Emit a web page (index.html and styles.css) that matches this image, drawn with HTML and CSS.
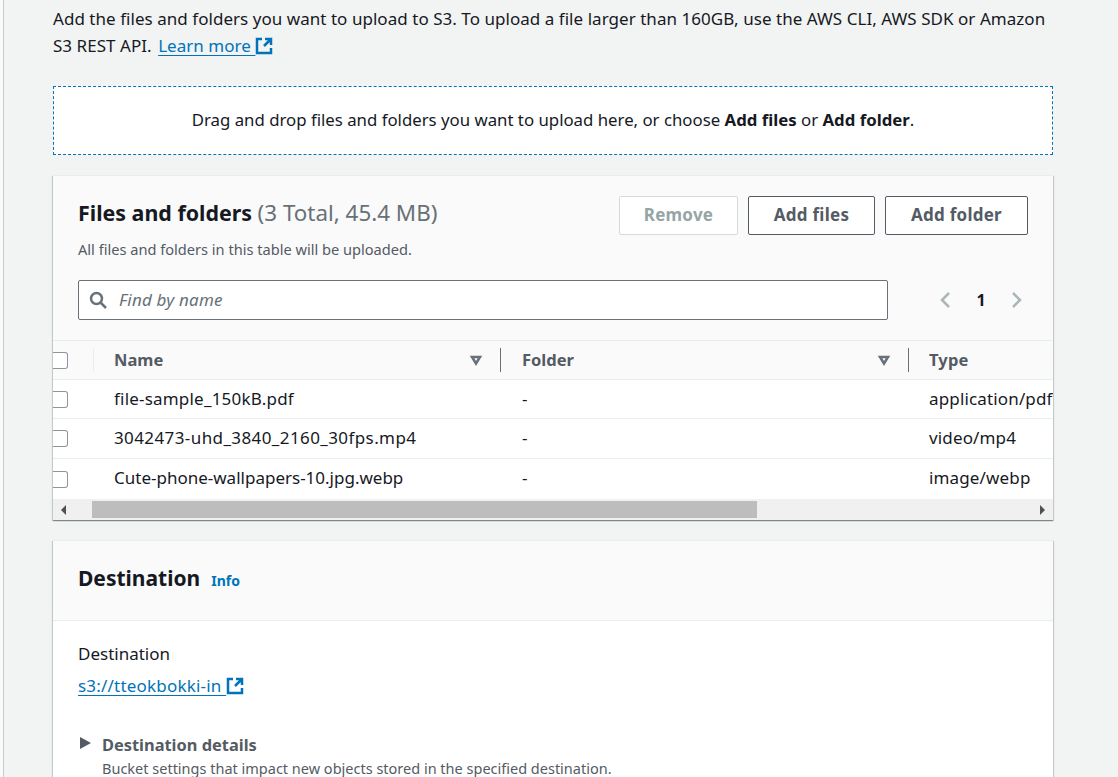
FILE: index.html
```html
<!DOCTYPE html>
<html>
    <head>
        <title>Upload</title>
        <link rel="stylesheet" href="styles.css">
    </head>
    <body>
        <div class="page">
            <p class="intro">Add the files and folders you want to upload to S3. To upload a file larger than 160GB, use the AWS CLI, AWS SDK or Amazon S3 REST API. <a class="ext-link" href="#">Learn more </a><svg class="ext-icon" viewBox="0 0 18 18"><path d="M7 2H2v14h14v-5M10 2h6v6M16 2L9 9"/></svg></p>

            <div class="dropzone">Drag and drop files and folders you want to upload here, or choose <b>Add files</b> or <b>Add folder</b>.</div>

            <section class="card">
                <div class="files-head">
                    <div class="files-title-row">
                        <div>
                            <h2 class="card-title">Files and folders <span class="count">(3 Total, 45.4 MB)</span></h2>
                            <p class="files-desc">All files and folders in this table will be uploaded.</p>
                        </div>
                        <div class="actions">
                            <button class="btn btn-remove">Remove</button>
                            <button class="btn btn-files">Add files</button>
                            <button class="btn btn-folder">Add folder</button>
                        </div>
                    </div>
                    <div class="filter-row">
                        <div class="search">
                            <svg class="search-icon" viewBox="0 0 18 18"><circle cx="7.5" cy="7.5" r="5.5"/><path d="M11.5 11.5L17 17"/></svg>
                            <span class="placeholder">Find by name</span>
                        </div>
                        <div class="pager">
                            <svg class="chevron" viewBox="0 0 12 18"><path d="M10 2L3 9l7 7"/></svg>
                            <span class="page-num">1</span>
                            <svg class="chevron" viewBox="0 0 12 18"><path d="M2 2l7 7-7 7"/></svg>
                        </div>
                    </div>
                </div>

                <div class="table">
                    <div class="row row-head">
                        <div class="cell-check"><span class="checkbox"></span></div>
                        <div class="cell cell-first">Name<svg class="sort" viewBox="0 0 14 12"><path d="M3 3h8L7 9.5z"/></svg></div>
                        <div class="cell cell-second">Folder<svg class="sort" viewBox="0 0 14 12"><path d="M3 3h8L7 9.5z"/></svg></div>
                        <div class="cell cell-third">Type</div>
                    </div>
                    <div class="row">
                        <div class="cell-check"><span class="checkbox"></span></div>
                        <div class="cell cell-first name-sample">file-sample_150kB.pdf</div>
                        <div class="cell cell-second">-</div>
                        <div class="cell cell-third">application/pdf</div>
                    </div>
                    <div class="row row-tall">
                        <div class="cell-check"><span class="checkbox"></span></div>
                        <div class="cell cell-first name-digits">3042473-uhd_3840_2160_30fps.mp4</div>
                        <div class="cell cell-second">-</div>
                        <div class="cell cell-third">video/mp4</div>
                    </div>
                    <div class="row row-last">
                        <div class="cell-check"><span class="checkbox"></span></div>
                        <div class="cell cell-first">Cute-phone-wallpapers-10.jpg.webp</div>
                        <div class="cell cell-second">-</div>
                        <div class="cell cell-third">image/webp</div>
                    </div>
                </div>

                <div class="scrollbar">
                    <span class="arrow-left"></span>
                    <span class="thumb"></span>
                    <span class="arrow-right"></span>
                </div>
            </section>

            <section class="card card-dest">
                <div class="dest-head">
                    <h2 class="card-title">Destination</h2>
                    <a class="info" href="#">Info</a>
                </div>
                <div class="dest-body">
                    <p class="dest-label">Destination</p>
                    <p class="dest-value"><a class="ext-link" href="#">s3://tteokbokki-in </a><svg class="ext-icon" viewBox="0 0 18 18"><path d="M7 2H2v14h14v-5M10 2h6v6M16 2L9 9"/></svg></p>
                    <div class="details">
                        <span class="caret"></span>
                        <div>
                            <p class="details-title">Destination details</p>
                            <p class="details-desc">Bucket settings that impact new objects stored in the specified destination.</p>
                        </div>
                    </div>
                </div>
            </section>
        </div>
    </body>
</html>
```
FILE: styles.css
```css
html, body{
    margin:0;
    height:777px;
    overflow:hidden;
    background-color:#f9fafa;
}
body{
    font-family:"Noto Sans", sans-serif;
    font-size:17px;
    color:#16191f;
}
p, h2{
    margin:0;
}
.page{
    margin-left:3px;
    height:777px;
    border-left:1px solid #c6cccc;
    background-color:#f2f3f3;
    padding:5px 65px 0 49px;
    overflow:hidden;
}
.intro{
    line-height:27px;
    letter-spacing:0.04px;
}
.intro .ext-link{
    margin-left:2px;
}
.ext-link{
    color:#0073bb;
    text-decoration:underline;
    text-underline-offset:3px;
    text-decoration-thickness:1px;
}
.ext-icon{
    width:18px;
    height:18px;
    vertical-align:-3px;
    fill:none;
    stroke:#0073bb;
    stroke-width:2.5;
}
.dropzone{
    margin-top:27px;
    height:69px;
    box-sizing:border-box;
    border:1px dashed #0073bb;
    background-color:white;
    font-size:16.8px;
    text-align:center;
    line-height:65px;
}
.card{
    margin-top:20px;
    background-color:white;
    border-top:1px solid #eaeded;
    box-shadow:0 1px 1px 0 rgba(0, 28, 36, 0.3), 1px 1px 1px 0 rgba(0, 28, 36, 0.15), -1px 1px 1px 0 rgba(0, 28, 36, 0.15);
}
.files-head{
    background-color:#fafafa;
    padding:19px 25px 20px;
}
.files-title-row{
    display:flex;
    justify-content:space-between;
}
.card-title{
    font-size:21.4px;
    font-weight:bold;
    line-height:36px;
}
.count{
    font-size:22.4px;
    font-weight:normal;
    color:#687078;
}
.files-desc{
    font-size:14.6px;
    color:#545b64;
    line-height:20px;
    margin-top:8px;
}
.actions{
    display:flex;
    gap:10px;
    align-items:flex-start;
    margin-top:1px;
}
.btn{
    height:39px;
    box-sizing:border-box;
    background-color:white;
    border:1px solid #545b64;
    border-radius:2px;
    color:#545b64;
    font-family:inherit;
    font-size:17px;
    letter-spacing:0.25px;
    font-weight:bold;
    padding:0 0 2px;
}
.btn-remove{
    width:119px;
    border-color:#d5dbdb;
    color:#95a5a6;
}
.btn-files{
    width:127px;
}
.btn-folder{
    width:143px;
}
.filter-row{
    display:flex;
    align-items:center;
    margin-top:21px;
}
.search{
    width:810px;
    height:40px;
    box-sizing:border-box;
    border:1px solid #687078;
    border-radius:2px;
    background-color:white;
    display:flex;
    align-items:center;
    padding-left:10px;
}
.search-icon{
    width:18px;
    height:18px;
    fill:none;
    stroke:#687078;
    stroke-width:2.5;
}
.placeholder{
    margin-left:12px;
    padding-bottom:2px;
    font-style:italic;
    letter-spacing:0.2px;
    color:#687078;
}
.pager{
    display:flex;
    align-items:center;
    margin-left:51px;
    gap:25px;
}
.chevron{
    width:12px;
    height:18px;
    fill:none;
    stroke:#aab7b8;
    stroke-width:2.5;
}
.page-num{
    font-weight:bold;
    font-size:16px;
    width:10px;
    text-align:center;
}
.table{
    overflow:hidden;
}
.row{
    display:flex;
    align-items:center;
    height:39px;
    box-sizing:border-box;
    border-bottom:1px solid #eaeded;
}
.row-tall{
    height:40px;
}
.row-last{
    height:40px;
    border-bottom:none;
}
.row-head{
    height:40px;
    border-top:1px solid #eaeded;
    background-color:#fafafa;
    font-size:16.5px;
    font-weight:bold;
    color:#545b64;
}
.cell-check{
    width:40px;
    flex:none;
    display:flex;
}
.checkbox{
    width:15px;
    height:17px;
    box-sizing:border-box;
    background-color:white;
    border:1.5px solid #8c949c;
    border-left:none;
    border-radius:0 3px 3px 0;
}
.cell{
    flex:none;
    box-sizing:border-box;
    display:flex;
    align-items:center;
    justify-content:space-between;
    white-space:nowrap;
    padding-bottom:2px;
}
.row-last .cell{
    padding-bottom:4px;
}
.cell-first, .cell-second{
    width:408px;
    padding-left:21px;
    padding-right:17px;
}
.cell-third{
    width:144px;
    padding-left:20px;
    letter-spacing:0.15px;
    overflow:hidden;
}
.row-head .cell-first{
    padding-left:20px;
}
.name-sample{
    letter-spacing:0.2px;
}
.name-digits{
    letter-spacing:0.4px;
}
.row-head .cell{
    height:24px;
    padding-bottom:0;
    line-height:22px;
}
.row-head .cell-first{
    border-left:1px solid #eaeded;
    border-right:1px solid #687078;
}
.row-head .cell-second{
    border-right:1px solid #687078;
}
.sort{
    width:14px;
    height:12px;
    fill:none;
    stroke:#687078;
    stroke-width:2.5;
}
.scrollbar{
    display:flex;
    align-items:center;
    height:21px;
    background-color:#f0f0f0;
}
.thumb{
    width:665px;
    height:17px;
    margin-left:26px;
    background-color:#bdbdbd;
}
.arrow-left{
    margin-left:8px;
    border-style:solid;
    border-width:5px 5px 5px 0;
    border-color:transparent #505050 transparent transparent;
}
.arrow-right{
    margin-left:283px;
    border-style:solid;
    border-width:5px 0 5px 5px;
    border-color:transparent transparent transparent #505050;
}
.dest-head{
    display:flex;
    align-items:baseline;
    height:80px;
    box-sizing:border-box;
    padding:19px 25px 0;
    background-color:#fafafa;
    border-bottom:1px solid #eaeded;
    gap:11px;
}
.dest-head .card-title{
    font-size:21px;
}
.info{
    color:#0073bb;
    font-size:14px;
    font-weight:bold;
    text-decoration:none;
}
.dest-body{
    padding:20px 25px;
}
.dest-label{
    line-height:26px;
}
.dest-value{
    margin-top:7px;
    line-height:24px;
}
.dest-value .ext-link{
    letter-spacing:0.2px;
}
.details{
    display:flex;
    margin-top:35px;
    gap:11px;
}
.caret{
    margin:4px 0 0 2px;
    border-style:solid;
    border-width:6px 0 6px 11px;
    border-color:transparent transparent transparent #545b64;
    height:0;
}
.details-title{
    font-size:16.4px;
    font-weight:bold;
    color:#545b64;
    line-height:24px;
}
.details-desc{
    font-size:14.5px;
    color:#545b64;
    line-height:23px;
}
```
